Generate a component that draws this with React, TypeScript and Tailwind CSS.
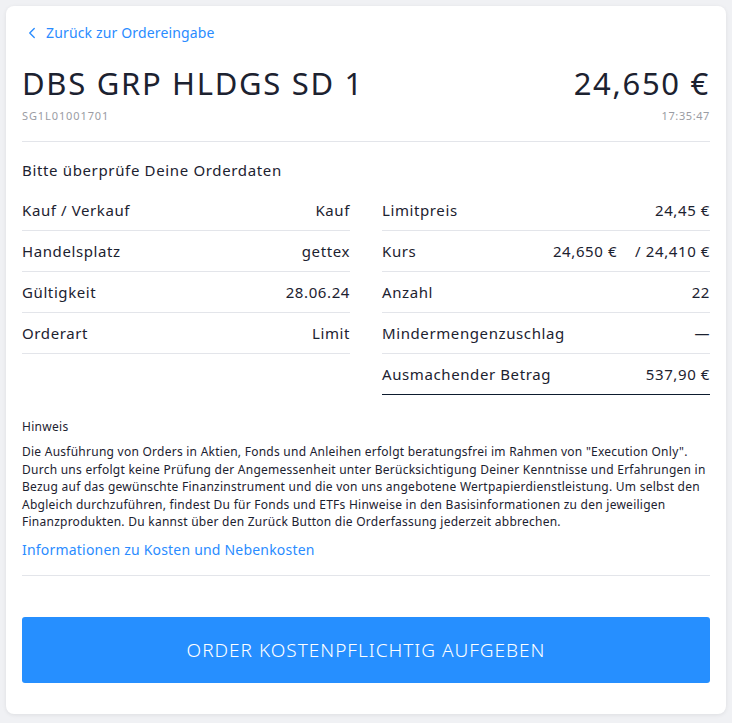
import { ChevronLeft } from 'lucide-react';

const leftRows = [
  { label: 'Kauf / Verkauf', value: 'Kauf' },
  { label: 'Handelsplatz', value: 'gettex' },
  { label: 'Gültigkeit', value: '28.06.24' },
  { label: 'Orderart', value: 'Limit' },
];

const rightRows = [
  { label: 'Limitpreis', value: '24,45 €' },
  { label: 'Kurs', value: '24,650 €\u00a0\u00a0\u00a0 / 24,410 €' },
  { label: 'Anzahl', value: '22' },
  { label: 'Mindermengenzuschlag', value: '—' },
];

function Row({ label, value, last }: { label: string; value: string; last?: boolean }) {
  return (
    <div
      className={`flex h-[41px] items-center justify-between border-b ${
        last ? 'border-[#0d1b2e]' : 'border-[#e3e5ea]'
      }`}
    >
      <span>{label}</span>
      <span>{value}</span>
    </div>
  );
}

export default function App() {
  return (
    <div
      className="min-h-screen bg-[#f0f1f4] p-[6px] text-[#1c2230]"
      style={{ fontFamily: '"Noto Sans", "Open Sans", sans-serif' }}
    >
      <div className="rounded-lg bg-white px-4 pt-[17px] pb-[31px] shadow-[0_1px_4px_rgba(0,0,0,0.08)]">
        <a className="flex items-center gap-[5px] pl-[1px] text-[14px] leading-5 tracking-[0.15px] text-[#2a8cff]">
          <ChevronLeft size={18} strokeWidth={1.8} />
          <span>Zurück zur Ordereingabe</span>
        </a>

        <div className="mt-[20px] flex items-start justify-between">
          <div>
            <h1 className="text-[31px] leading-[40px] font-normal tracking-[1.7px]">DBS GRP HLDGS SD 1</h1>
            <div className="mt-[5px] text-[11px] leading-4 tracking-[0.9px] text-[#9a9ca3]">SG1L01001701</div>
          </div>
          <div className="text-right">
            <div className="text-[31px] leading-[40px] tracking-[1.7px]">24,650 €</div>
            <div className="mt-[5px] text-[11px] leading-4 tracking-[0.6px] text-[#9a9ca3]">17:35:47</div>
          </div>
        </div>

        <div className="mt-[17px] border-t border-[#e3e5ea]" />

        <div className="mt-[18px] text-[15px] leading-5 tracking-[0.65px]">Bitte überprüfe Deine Orderdaten</div>

        <div className="mt-[10px] grid grid-cols-2 gap-8 text-[15px] tracking-[0.6px]">
          <div>
            {leftRows.map((r) => (
              <Row key={r.label} label={r.label} value={r.value} />
            ))}
          </div>
          <div>
            {rightRows.map((r) => (
              <Row key={r.label} label={r.label} value={r.value} />
            ))}
            <Row label="Ausmachender Betrag" value="537,90 €" last />
          </div>
        </div>

        <div className="mt-[23px] text-[12px] leading-[18px] tracking-[0.3px]">Hinweis</div>
        <p className="mt-[7px] text-[12px] leading-[17.6px] tracking-[0.25px]">
          Die Ausführung von Orders in Aktien, Fonds und Anleihen erfolgt beratungsfrei im Rahmen von "Execution Only".
          <br />
          Durch uns erfolgt keine Prüfung der Angemessenheit unter Berücksichtigung Deiner Kenntnisse und Erfahrungen in
          <br />
          Bezug auf das gewünschte Finanzinstrument und die von uns angebotene Wertpapierdienstleistung. Um selbst den
          <br />
          Abgleich durchzuführen, findest Du für Fonds und ETFs Hinweise in den Basisinformationen zu den jeweiligen
          <br />
          Finanzprodukten. Du kannst über den Zurück Button die Orderfassung jederzeit abbrechen.
        </p>
        <a className="mt-[9px] block text-[14px] leading-5 tracking-[0.2px] text-[#2a8cff]">
          Informationen zu Kosten und Nebenkosten
        </a>

        <div className="mt-[15px] border-t border-[#e3e5ea]" />

        <button className="mt-[41px] flex h-[66px] w-full items-center justify-center rounded-[3px] bg-[#268fff] text-[19px] font-light tracking-[1px] text-white">
          ORDER KOSTENPFLICHTIG AUFGEBEN
        </button>
      </div>
    </div>
  );
}
